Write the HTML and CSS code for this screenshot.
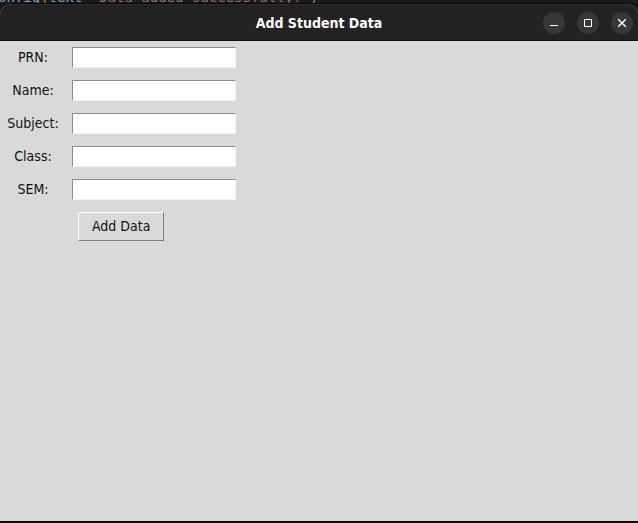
FILE: index.html
```
<!DOCTYPE html>
<html lang="en">
<head>
<meta charset="utf-8">
<title>Add Student Data</title>
<link rel="stylesheet" href="styles.css">
</head>
<body>
<div class="editor"><code>onfig<span class="paren">(</span>text=<span class="string">"Data added successfully!"</span><span class="paren">)</span></code></div>
<main class="window">
  <header class="titlebar">
    <h1 class="title">Add Student Data</h1>
    <div class="controls">
      <button class="control" type="button" aria-label="Minimize"><svg viewBox="0 0 22 22"><path d="M7 13.5h8"/></svg></button>
      <button class="control" type="button" aria-label="Maximize"><svg viewBox="0 0 22 22"><path d="M7.5 7.5h7v7h-7z"/></svg></button>
      <button class="control" type="button" aria-label="Close"><svg viewBox="0 0 22 22"><path class="cross" d="M7.2 7.2l7.6 7.6M14.8 7.2l-7.6 7.6"/></svg></button>
    </div>
  </header>
  <form class="form">
    <label for="prn">PRN:</label><input id="prn" type="text">
    <label for="name">Name:</label><input id="name" type="text">
    <label for="subject">Subject:</label><input id="subject" type="text">
    <label for="class">Class:</label><input id="class" type="text">
    <label for="sem">SEM:</label><input id="sem" type="text">
    <button class="submit" type="button">Add Data</button>
  </form>
</main>
</body>
</html>
```
FILE: styles.css
```
* { box-sizing: border-box; }

body {
  margin: 0;
  height: 100vh;
  display: flex;
  flex-direction: column;
  background: #151515;
  border-bottom: 2px solid #0b0d10;
}

.editor {
  height: 3px;
  display: flex;
  align-items: flex-end;
  overflow: hidden;
  background: #1b1b1b;
  color: #6da3bd;
  white-space: pre;
}

.editor code {
  margin-left: -2px;
  font: 14px/12px "DejaVu Sans Mono", monospace;
}

.paren { color: #b39b1c; }
.string { color: #9a6c58; }

.window {
  flex: 1;
  display: flex;
  flex-direction: column;
  border-top: 1px solid #080808;
  border-radius: 12px 12px 0 0;
  background: #d9d9d9;
  overflow: hidden;
}

.titlebar {
  height: 37px;
  display: grid;
  grid-template-columns: 1fr auto 1fr;
  align-items: center;
  padding-right: 5px;
  padding-left: 5px;
  background: #222222;
  border-top: 1px solid #2c2c2c;
  border-bottom: 1px solid #101010;
}

.title {
  grid-column: 2;
  margin: 0;
  color: #ffffff;
  font: bold 14px/20px "DejaVu Sans Condensed", "DejaVu Sans", sans-serif;
}

.controls {
  display: flex;
  justify-content: flex-end;
  gap: 12px;
}

.control {
  width: 22px;
  height: 22px;
  padding: 0;
  border: 0;
  border-radius: 50%;
  background: #373737;
}

.control svg {
  display: block;
  fill: none;
  stroke: #ffffff;
  stroke-width: 1;
}

.control .cross { stroke-width: 1.4; }

.form {
  display: grid;
  grid-template-columns: 52px 164px;
  column-gap: 13px;
  row-gap: 12px;
  align-items: center;
  padding: 6px 7px;
  color: #111111;
  font: 14px/20px "DejaVu Sans Condensed", "DejaVu Sans", sans-serif;
}

.form label {
  height: 21px;
  text-align: center;
}

.form input {
  width: 100%;
  height: 21px;
  padding: 0 3px;
  border: 1px solid;
  border-color: #8c8c8c #f2f2f2 #f2f2f2 #8c8c8c;
  border-radius: 0;
  background: #ffffff;
  font: inherit;
}

.submit {
  grid-column: 2;
  justify-self: start;
  margin-left: 6px;
  height: 29px;
  padding: 0 13px 2px;
  border: 1px solid;
  border-color: #ffffff #7d7d7d #7d7d7d #ffffff;
  background: #d9d9d9;
  color: inherit;
  font: inherit;
}
```
